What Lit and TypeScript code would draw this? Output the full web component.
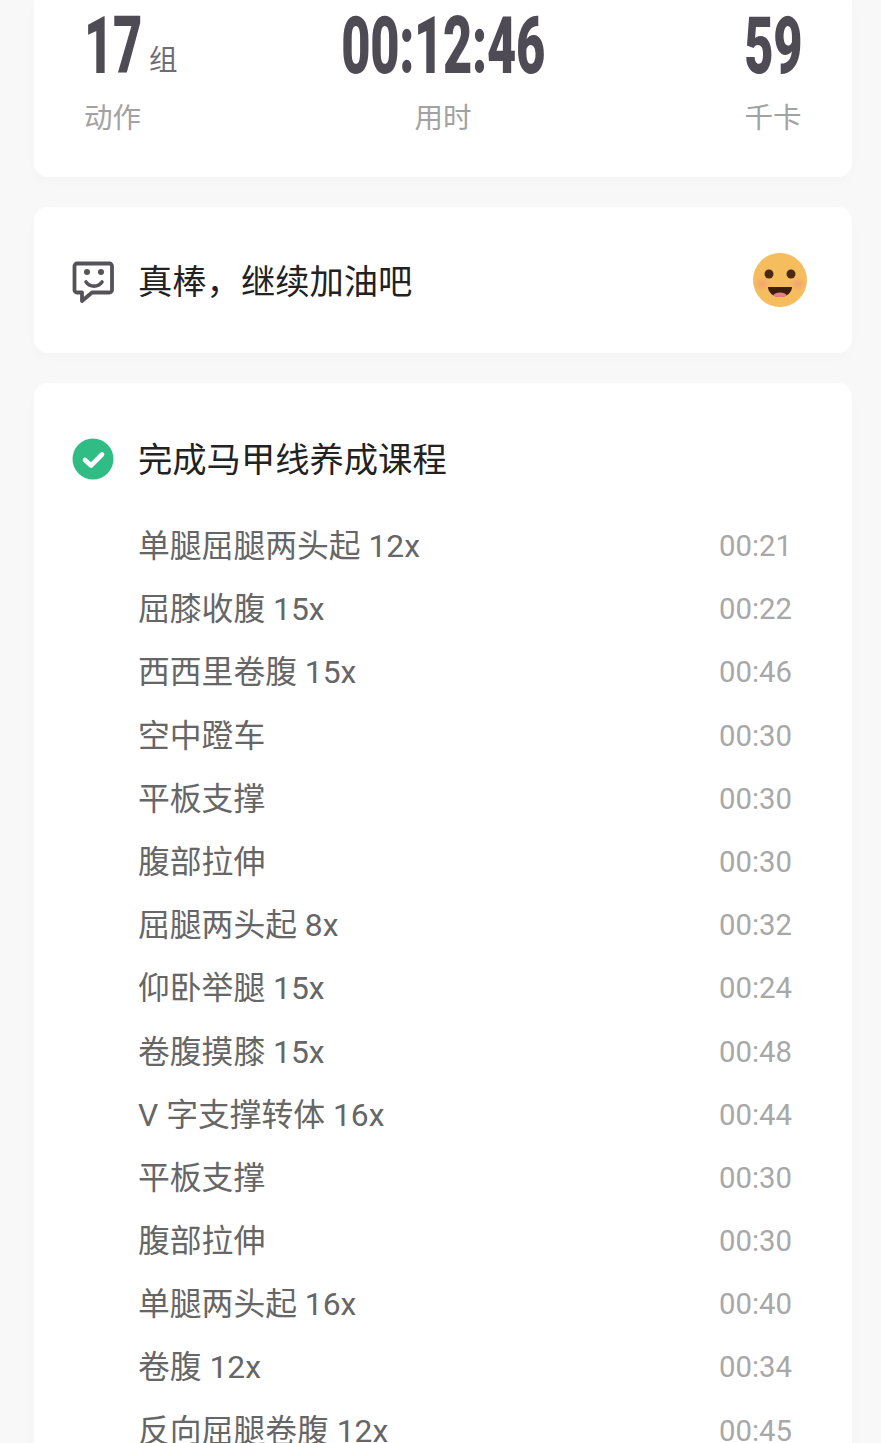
import { LitElement, html, css } from "lit";
import { customElement } from "lit/decorators.js";

const rows: [string, string][] = [
  ["单腿屈腿两头起 12x", "00:21"],
  ["屈膝收腹 15x", "00:22"],
  ["西西里卷腹 15x", "00:46"],
  ["空中蹬车", "00:30"],
  ["平板支撑", "00:30"],
  ["腹部拉伸", "00:30"],
  ["屈腿两头起 8x", "00:32"],
  ["仰卧举腿 15x", "00:24"],
  ["卷腹摸膝 15x", "00:48"],
  ["V 字支撑转体 16x", "00:44"],
  ["平板支撑", "00:30"],
  ["腹部拉伸", "00:30"],
  ["单腿两头起 16x", "00:40"],
  ["卷腹 12x", "00:34"],
  ["反向屈腿卷腹 12x", "00:45"],
];

@customElement("app-root")
export class AppRoot extends LitElement {
  static styles = css`
    :host {
      display: block;
      height: 1443px;
      overflow: hidden;
      background: #f8f8f8;
      font-family: "Roboto", "Noto Sans CJK SC", sans-serif;
    }
    .page {
      display: flex;
      flex-direction: column;
      gap: 30px;
      padding: 0 29px 0 34px;
    }
    .card {
      background: #fff;
      border-radius: 14px;
      box-shadow: 0 4px 14px rgba(0, 0, 0, 0.015);
    }
    .stats {
      border-radius: 0 0 14px 14px;
      height: 177px;
      display: flex;
      justify-content: space-between;
      padding: 0 50px 0 50px;
      box-sizing: border-box;
    }
    .stat {
      display: flex;
      flex-direction: column;
      align-items: center;
      width: 58px;
      flex: none;
    }
    .stat.left { align-items: flex-start; }
    .num-line {
      height: 99px;
      padding-top: 2px;
      display: flex;
      align-items: flex-start;
      white-space: nowrap;
      justify-content: center;
    }
    .num {
      font-family: "Roboto", sans-serif;
      font-weight: 900;
      font-size: 79px;
      line-height: 88px;
      color: #4f4b55;
      display: inline-block;
      transform: scaleX(0.64);
      letter-spacing: -0.5px;
    }
    .stat.left .num { transform-origin: left center; }
    .unit {
      font-size: 28.500px;
      line-height: 36px;
      color: #6f6d72;
      position: absolute;
      margin: 41px 0 0 68px;
    }
    .label {
      font-size: 28.500px;
      line-height: 36px;
      color: #a2a2a2;
      white-space: nowrap;
    }
    .note {
      height: 146px;
      display: flex;
      align-items: center;
      padding: 0 44px 0 38px;
    }
    .note-icon { width: 43px; height: 44px; flex: none; margin-right: 23px; margin-top: 4px; }
    .title {
      font-size: 34.300px;
      line-height: 44px;
      color: #222;
      flex: 1;
    }
    .note .title { padding-top: 3px; }
    .emoji { width: 56px; height: 56px; flex: none; }
    .list { padding: 53px 60px 0 38px; height: 1100px; }
    .head { display: flex; align-items: center; height: 46px; margin-bottom: 33px; }
    .head .title { padding-top: 2px; }
    .check { width: 42px; height: 42px; flex: none; margin-right: 24px; }
    .row {
      display: flex;
      justify-content: space-between;
      height: 63.2px;
      line-height: 63.2px;
      padding-left: 66px;
      font-size: 31.8px;
      color: #666;
      white-space: nowrap;
    }
    .time {
      font-size: 29.300px;
      color: #a8a8a8;
    }
  `;

  render() {
    return html`
      <div class="page">
        <section class="card stats">
          <div class="stat left">
            <div class="num-line"><span class="num">17</span><span class="unit">组</span></div>
            <div class="label">动作</div>
          </div>
          <div class="stat">
            <div class="num-line"><span class="num">00:12:46</span></div>
            <div class="label">用时</div>
          </div>
          <div class="stat">
            <div class="num-line"><span class="num">59</span></div>
            <div class="label">千卡</div>
          </div>
        </section>

        <section class="card note">
          <svg class="note-icon" viewBox="0 0 43 44" fill="none">
            <path d="M5 3.500H37.500a2.500 2.500 0 0 1 2.500 2.500V30a2.500 2.500 0 0 1-2.500 2.500H20L10 41V32.500H5a2.500 2.500 0 0 1-2.500-2.500V6A2.500 2.500 0 0 1 5 3.500Z" stroke="#55525a" stroke-width="3.800" stroke-linejoin="round"/>
            <circle cx="15" cy="12" r="3" fill="#55525a"/>
            <circle cx="29" cy="12" r="3" fill="#55525a"/>
            <path d="M14 22c4 5.500 12 5.500 16 0" stroke="#55525a" stroke-width="3.600" stroke-linecap="round"/>
          </svg>
          <div class="title">真棒，继续加油吧</div>
          <svg class="emoji" viewBox="0 0 56 56">
            <defs>
              <radialGradient id="ch">
                <stop offset="0" stop-color="#f19a78" stop-opacity=".75"/>
                <stop offset="1" stop-color="#f19a78" stop-opacity="0"/>
              </radialGradient>
            </defs>
            <circle cx="28" cy="28" r="27" fill="#f6bd5f"/>
            <ellipse cx="10" cy="32" rx="9" ry="7" fill="url(#ch)"/>
            <ellipse cx="46" cy="32" rx="9" ry="7" fill="url(#ch)"/>
            <circle cx="17" cy="22" r="4.500" fill="#4a2a12"/>
            <circle cx="39" cy="22" r="4.500" fill="#4a2a12"/>
            <path d="M16 35h24c0 5-5 10-12 10s-12-5-12-10Z" fill="#3c1f0f"/>
            <path d="M21 43.500c2-4 12-4 14 0-4 2-10 2-14 0Z" fill="#ea7f7f"/>
          </svg>
        </section>

        <section class="card list">
          <div class="head">
            <svg class="check" viewBox="0 0 42 42">
              <circle cx="21" cy="21" r="20.500" fill="#2fbd85"/>
              <path d="M13 22l6 5.500 11-11" fill="none" stroke="#fff" stroke-width="4.600" stroke-linecap="round" stroke-linejoin="round"/>
            </svg>
            <div class="title">完成马甲线养成课程</div>
          </div>
          ${rows.map(
            ([name, time]) => html`
              <div class="row"><span>${name}</span><span class="time">${time}</span></div>
            `
          )}
        </section>
      </div>
    `;
  }
}
